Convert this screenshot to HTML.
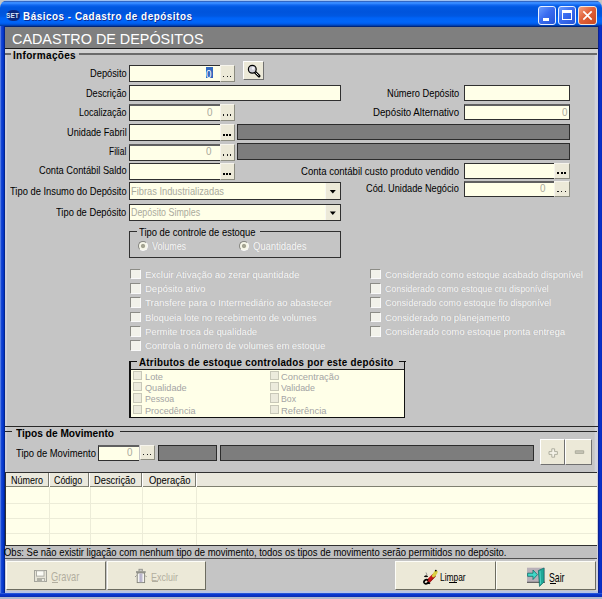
<!DOCTYPE html>
<html><head><meta charset="utf-8"><style>
html,body{margin:0;padding:0;width:602px;height:599px;overflow:hidden;background:#fff}
body{position:relative;font-family:"Liberation Sans",sans-serif;}
div{position:absolute;box-sizing:border-box}
.t{white-space:nowrap;line-height:20px;height:20px;transform-origin:0 0}
.inp{background:#ffffe8;border:1px solid #303030}
.dark{background:#7d7d7d;border:1px solid #2c2c2c}
.dbtn{background:#ece9d8;border:1px solid #f6f4ec;border-right-color:#8c8c80;border-bottom-color:#8c8c80}
.btn{background:#ece9d8;border:1px solid #fff;border-right-color:#707070;border-bottom-color:#707070}
.chk{background:#f2f2ea;border:1px solid #8c8c86;border-right-color:#fafafa;border-bottom-color:#fafafa}
.dis{color:#f4f4f4;text-shadow:-0.6px -0.6px 0 #a0a0a0}
</style></head><body>
<div style="left:0px;top:0px;width:602px;height:599px;background:#c5c5c5"></div>
<div style="left:0;top:0;width:602px;height:28px;border-radius:8px 8px 0 0;background:linear-gradient(to bottom,#a0c0f0 0px,#a0c0f0 0.6px,#2c5cb8 1.3px,#3a8cff 2.3px,#3287ff 3.5px,#1268f0 5px,#0058e2 7px,#0054dc 12px,#0058e2 16px,#0063f6 18px,#0066fa 22px,#005ae8 24px,#0040b0 25.5px,#001860 27px,#001860 28px)"></div>
<div style="left:0px;top:26px;width:5px;height:573px;background:linear-gradient(to right,#8aa8f0 0px,#1a4cd8 1px,#0a3cd0 2.5px,#0032c0 3.8px,#001a70 5px)"></div>
<div style="left:5px;top:49px;width:1.5px;height:544px;background:#cfcfd6"></div>
<div style="left:593.5px;top:49px;width:4.1px;height:544px;background:linear-gradient(to right,#c5c5c5,#d2d3da 40%,#d0d0da)"></div>
<div style="left:597.6px;top:26px;width:4.4px;height:573px;background:linear-gradient(to right,#0a1c78 0px,#0a2ab8 1.2px,#0a30c8 2.5px,#0828b8 4.4px)"></div>
<div style="left:5px;top:591.2px;width:593px;height:1.6px;background:#b8c4e4"></div>
<div style="left:0px;top:592.7px;width:602px;height:4.6px;background:linear-gradient(to bottom,#3a6ae0 0px,#0a38d0 1.2px,#0830c0 3px,#0a2aa8 4.6px)"></div>
<div style="left:0px;top:597.3px;width:602px;height:1.7px;background:#b0b8cc"></div>
<div style="left:6.5px;top:9.5px;width:13.5px;height:11px;border-radius:40%;background:radial-gradient(ellipse at 50% 50%,#08206a 0%,#0a2c88 65%,#0a46c0 100%)"></div>
<div class="t" style="left:6.40px;top:5.89px;font-size:7.83px;font-weight:bold;color:#d8e4fa;letter-spacing:0px;transform:scaleX(0.8419);">SET</div>
<div class="t" style="left:23.41px;top:6.49px;font-size:11.00px;font-weight:bold;color:#fff;letter-spacing:0.6px;transform:scaleX(0.8961);text-shadow:1px 1px 0 #0a2a90">Básicos - Cadastro de depósitos</div>
<div style="left:538px;top:6px;width:18px;height:18.5px;border:1px solid #e8f0ff;border-radius:3px;background:linear-gradient(135deg,#6a9cff 0%,#3a6cf0 45%,#2454d8 100%)"></div>
<div style="left:558px;top:6px;width:18px;height:18.5px;border:1px solid #e8f0ff;border-radius:3px;background:linear-gradient(135deg,#6a9cff 0%,#3a6cf0 45%,#2454d8 100%)"></div>
<div style="left:543px;top:18px;width:6px;height:3px;background:#fff"></div>
<div style="left:562px;top:10px;width:10px;height:10px;border:1px solid #fff;border-top:3px solid #fff"></div>
<div style="left:578px;top:6px;width:19px;height:18.5px;border:1px solid #f0e8e0;border-radius:3px;background:linear-gradient(135deg,#f4a080 0%,#e06038 45%,#c84820 100%)"></div>
<svg style="position:absolute;left:578px;top:6px" width="19" height="19"><path d="M5.3 5.3 L13.7 13.7 M13.7 5.3 L5.3 13.7" stroke="#fff" stroke-width="1.7"/></svg>
<div style="left:5px;top:27px;width:592.6px;height:22px;background:#7f7f7f;border-bottom:1px solid #1a1a1a"></div>
<div class="t" style="left:11.64px;top:28.78px;font-size:15.36px;font-weight:normal;color:#fff;letter-spacing:0px;transform:scaleX(0.9362);">CADASTRO DE DEPÓSITOS</div>
<div style="left:5px;top:49px;width:592px;height:4px;background:#d2d2d2"></div>
<div style="left:5px;top:53px;width:6px;height:2px;background:#6a6a6a"></div>
<div style="left:79px;top:53px;width:518px;height:2px;background:#6a6a6a"></div>
<div style="left:5px;top:425.6px;width:592.6px;height:1.1px;background:#282828"></div>
<div class="t" style="left:12.70px;top:46.44px;font-size:10.00px;font-weight:bold;color:#000;letter-spacing:0.3px;transform:scaleX(1.0037);">Informações</div>
<div class="t" style="left:89.50px;top:64.28px;font-size:10.14px;font-weight:normal;color:#000;letter-spacing:0px;transform:scaleX(0.9182);">Depósito</div>
<div class="t" style="left:85.60px;top:83.58px;font-size:10.14px;font-weight:normal;color:#000;letter-spacing:0px;transform:scaleX(0.9019);">Descrição</div>
<div class="t" style="left:78.70px;top:102.98px;font-size:10.14px;font-weight:normal;color:#000;letter-spacing:0px;transform:scaleX(0.8881);">Localização</div>
<div class="t" style="left:66.50px;top:123.08px;font-size:10.14px;font-weight:normal;color:#000;letter-spacing:0px;transform:scaleX(0.9065);">Unidade Fabril</div>
<div class="t" style="left:108.90px;top:142.38px;font-size:10.14px;font-weight:normal;color:#000;letter-spacing:0px;transform:scaleX(0.8306);">Filial</div>
<div class="t" style="left:38.60px;top:161.48px;font-size:10.14px;font-weight:normal;color:#000;letter-spacing:0px;transform:scaleX(0.9153);">Conta Contábil Saldo</div>
<div class="t" style="left:9.60px;top:181.98px;font-size:10.14px;font-weight:normal;color:#000;letter-spacing:0px;transform:scaleX(0.9235);">Tipo de Insumo do Depósito</div>
<div class="t" style="left:55.90px;top:202.78px;font-size:10.14px;font-weight:normal;color:#000;letter-spacing:0px;transform:scaleX(0.9229);">Tipo de Depósito</div>
<div class="inp" style="left:129px;top:65px;width:91px;height:17px;border-right:none"></div>
<div class="dbtn" style="left:219.5px;top:65px;width:15.5px;height:17px;"></div>
<div style="left:222.9px;top:75.8px;width:1.3px;height:1.3px;background:#202020"></div>
<div style="left:226.5px;top:75.8px;width:1.3px;height:1.3px;background:#202020"></div>
<div style="left:230.1px;top:75.8px;width:1.3px;height:1.3px;background:#202020"></div>
<div style="left:206px;top:67px;width:7px;height:11px;background:#3168c0"></div>
<div class="t" style="left:206.41px;top:63.88px;font-size:11.30px;font-weight:normal;color:#fff;letter-spacing:0px;transform:scaleX(0.8734);">0</div>
<div class="btn" style="left:243px;top:61px;width:21px;height:19px"></div>
<svg style="position:absolute;left:243px;top:61px" width="21" height="19"><path d="M12.2 11.2 L16 15" stroke="#000" stroke-width="2.9" stroke-linecap="round"/><path d="M12.6 11.6 L15.6 14.6" stroke="#f4f4f0" stroke-width="0.9"/><circle cx="9.3" cy="8.2" r="3.9" fill="#cfcfd8" stroke="#000" stroke-width="1.2"/><circle cx="10.2" cy="7.4" r="1.3" fill="#f4f4fa"/></svg>
<div class="inp" style="left:129px;top:84.5px;width:212px;height:16.5px;"></div>
<div class="inp" style="left:129px;top:103.5px;width:91px;height:17px;border-top:2px solid #606060;border-right:none"></div>
<div class="dbtn" style="left:219.5px;top:103.5px;width:15.5px;height:17px;"></div>
<div style="left:222.9px;top:114.3px;width:1.3px;height:1.3px;background:#202020"></div>
<div style="left:226.5px;top:114.3px;width:1.3px;height:1.3px;background:#202020"></div>
<div style="left:230.1px;top:114.3px;width:1.3px;height:1.3px;background:#202020"></div>
<div class="t" style="left:206.50px;top:102.98px;font-size:10.14px;font-weight:normal;color:#aaaa9c;letter-spacing:0px;transform:scaleX(0.9751);">0</div>
<div class="inp" style="left:129px;top:123.5px;width:91px;height:17px;border-right:none"></div>
<div class="dbtn" style="left:219.5px;top:123.5px;width:15.5px;height:17px;"></div>
<div style="left:222.9px;top:134.3px;width:2px;height:1.8px;background:#000"></div>
<div style="left:226.0px;top:134.3px;width:2px;height:1.8px;background:#000"></div>
<div style="left:229.1px;top:134.3px;width:2px;height:1.8px;background:#000"></div>
<div class="dark" style="left:237px;top:123.8px;width:333px;height:16.5px;"></div>
<div class="inp" style="left:129px;top:143.5px;width:91px;height:17px;border-top:2px solid #606060;border-right:none"></div>
<div class="dbtn" style="left:219.5px;top:143.5px;width:15.5px;height:17px;"></div>
<div style="left:222.9px;top:154.3px;width:1.3px;height:1.3px;background:#202020"></div>
<div style="left:226.5px;top:154.3px;width:1.3px;height:1.3px;background:#202020"></div>
<div style="left:230.1px;top:154.3px;width:1.3px;height:1.3px;background:#202020"></div>
<div class="t" style="left:206.00px;top:142.38px;font-size:10.14px;font-weight:normal;color:#aaaa9c;letter-spacing:0px;transform:scaleX(0.9751);">0</div>
<div class="dark" style="left:237px;top:143px;width:333px;height:16.8px;"></div>
<div class="inp" style="left:129px;top:162.5px;width:91px;height:17px;border-right:none"></div>
<div class="dbtn" style="left:219.5px;top:162.5px;width:15.5px;height:17px;"></div>
<div style="left:222.9px;top:173.3px;width:2px;height:1.8px;background:#000"></div>
<div style="left:226.0px;top:173.3px;width:2px;height:1.8px;background:#000"></div>
<div style="left:229.1px;top:173.3px;width:2px;height:1.8px;background:#000"></div>
<div class="inp" style="left:129px;top:182px;width:212px;height:18px;border-color:#303030;border-width:1.2px"></div>
<div style="left:325.2px;top:183px;width:15px;height:16px;background:#ece9d8;border-left:1px solid #f8f8f0"></div>
<svg style="position:absolute;left:325px;top:183px" width="15" height="16"><path d="M4.8 7 L10.8 7 L7.8 10.5 Z" fill="#000"/></svg>
<div class="t" style="left:130.94px;top:181.98px;font-size:10.14px;font-weight:normal;color:#aaaa9c;letter-spacing:0px;transform:scaleX(0.9181);">Fibras Industrializadas</div>
<div class="inp" style="left:129px;top:203.5px;width:212px;height:17.5px;border-color:#303030;border-width:1.2px"></div>
<div style="left:325.2px;top:204.5px;width:15px;height:15.5px;background:#ece9d8;border-left:1px solid #f8f8f0"></div>
<svg style="position:absolute;left:325px;top:204.5px" width="15" height="16"><path d="M4.8 6.5 L10.8 6.5 L7.8 10 Z" fill="#000"/></svg>
<div class="t" style="left:130.97px;top:202.73px;font-size:10.29px;font-weight:normal;color:#aaaa9c;letter-spacing:0px;transform:scaleX(0.8637);">Depósito Simples</div>
<div class="t" style="left:387.00px;top:83.58px;font-size:10.14px;font-weight:normal;color:#000;letter-spacing:0px;transform:scaleX(0.9163);">Número Depósito</div>
<div class="t" style="left:373.10px;top:102.78px;font-size:10.14px;font-weight:normal;color:#000;letter-spacing:0px;transform:scaleX(0.9560);">Depósito Alternativo</div>
<div class="t" style="left:301.20px;top:161.58px;font-size:10.14px;font-weight:normal;color:#000;letter-spacing:0px;transform:scaleX(0.9450);">Conta contábil custo produto vendido</div>
<div class="t" style="left:366.40px;top:178.98px;font-size:10.14px;font-weight:normal;color:#000;letter-spacing:0px;transform:scaleX(0.9108);">Cód. Unidade Negócio</div>
<div class="inp" style="left:464px;top:84.5px;width:106px;height:16.5px;"></div>
<div class="inp" style="left:464px;top:103.5px;width:106px;height:16.5px;border-top:2px solid #606060"></div>
<div class="t" style="left:561.50px;top:102.78px;font-size:10.14px;font-weight:normal;color:#aaaa9c;letter-spacing:0px;transform:scaleX(0.9751);">0</div>
<div class="inp" style="left:464px;top:162.5px;width:90px;height:16px;border-right:none"></div>
<div class="dbtn" style="left:554px;top:162.5px;width:16px;height:16px;"></div>
<div style="left:557.4px;top:172.3px;width:2px;height:1.8px;background:#000"></div>
<div style="left:560.5px;top:172.3px;width:2px;height:1.8px;background:#000"></div>
<div style="left:563.6px;top:172.3px;width:2px;height:1.8px;background:#000"></div>
<div class="inp" style="left:464px;top:181px;width:90px;height:16px;border-top:2px solid #606060;border-right:none"></div>
<div class="dbtn" style="left:554px;top:181px;width:16px;height:16px;"></div>
<div style="left:557.4px;top:190.8px;width:1.3px;height:1.3px;background:#202020"></div>
<div style="left:561.0px;top:190.8px;width:1.3px;height:1.3px;background:#202020"></div>
<div style="left:564.6px;top:190.8px;width:1.3px;height:1.3px;background:#202020"></div>
<div class="t" style="left:540.00px;top:178.98px;font-size:10.14px;font-weight:normal;color:#aaaa9c;letter-spacing:0px;transform:scaleX(0.9751);">0</div>
<div style="left:129px;top:231.2px;width:1.2px;height:26px;background:#303030"></div>
<div style="left:129px;top:231.2px;width:8px;height:1.2px;background:#303030"></div>
<div style="left:259.5px;top:231.2px;width:81px;height:1.2px;background:#303030"></div>
<div style="left:339.5px;top:231.2px;width:1.2px;height:26px;background:#303030"></div>
<div style="left:129px;top:256.5px;width:211.7px;height:1.2px;background:#303030"></div>
<div class="t" style="left:138.73px;top:222.98px;font-size:10.14px;font-weight:normal;color:#000;letter-spacing:0px;transform:scaleX(0.9308);">Tipo de controle de estoque</div>
<div style="left:137.79999999999998px;top:241.1px;width:9.8px;height:9.8px;border-radius:50%;border:1px solid #fafafa;border-top-color:#858580;border-left-color:#858580;background:radial-gradient(circle at 50% 50%,#a4a492 0,#a4a492 1.6px,#f6f6e8 2.6px,#f6f6e8 4px)"></div>
<div style="left:239.0px;top:241.1px;width:9.8px;height:9.8px;border-radius:50%;border:1px solid #fafafa;border-top-color:#858580;border-left-color:#858580;background:radial-gradient(circle at 50% 50%,#a4a492 0,#a4a492 1.6px,#f6f6e8 2.6px,#f6f6e8 4px)"></div>
<div class="t" style="left:151.87px;top:237.24px;font-size:10.00px;font-weight:normal;color:#f8f8f8;letter-spacing:0px;transform:scaleX(0.8864);text-shadow:-0.6px -0.5px 0 #acacac">Volumes</div>
<div class="t" style="left:252.73px;top:237.24px;font-size:10.00px;font-weight:normal;color:#f8f8f8;letter-spacing:0px;transform:scaleX(0.9433);text-shadow:-0.6px -0.5px 0 #acacac">Quantidades</div>
<div class="chk" style="left:129.7px;top:268.6px;width:11.3px;height:10.8px;"></div>
<div class="t" style="left:144.93px;top:264.79px;font-size:9.57px;font-weight:normal;color:#f8f8f8;letter-spacing:0px;transform:scaleX(0.9937);text-shadow:-0.6px -0.5px 0 #acacac">Excluir Ativação ao zerar quantidade</div>
<div class="chk" style="left:129.7px;top:283px;width:11.3px;height:10.8px;"></div>
<div class="t" style="left:144.93px;top:279.19px;font-size:9.57px;font-weight:normal;color:#f8f8f8;letter-spacing:0px;transform:scaleX(0.9950);text-shadow:-0.6px -0.5px 0 #acacac">Depósito ativo</div>
<div class="chk" style="left:129.7px;top:297.3px;width:11.3px;height:10.8px;"></div>
<div class="t" style="left:144.93px;top:293.49px;font-size:9.57px;font-weight:normal;color:#f8f8f8;letter-spacing:0px;transform:scaleX(1.0013);text-shadow:-0.6px -0.5px 0 #acacac">Transfere para o Intermediário ao abastecer</div>
<div class="chk" style="left:129.7px;top:311.5px;width:11.3px;height:10.8px;"></div>
<div class="t" style="left:144.94px;top:307.69px;font-size:9.57px;font-weight:normal;color:#f8f8f8;letter-spacing:0px;transform:scaleX(0.9775);text-shadow:-0.6px -0.5px 0 #acacac">Bloqueia lote no recebimento de volumes</div>
<div class="chk" style="left:129.7px;top:326px;width:11.3px;height:10.8px;"></div>
<div class="t" style="left:144.94px;top:322.19px;font-size:9.57px;font-weight:normal;color:#f8f8f8;letter-spacing:0px;transform:scaleX(0.9806);text-shadow:-0.6px -0.5px 0 #acacac">Permite troca de qualidade</div>
<div class="chk" style="left:129.7px;top:340.3px;width:11.3px;height:10.8px;"></div>
<div class="t" style="left:144.94px;top:336.49px;font-size:9.57px;font-weight:normal;color:#f8f8f8;letter-spacing:0px;transform:scaleX(0.9831);text-shadow:-0.6px -0.5px 0 #acacac">Controla o número de volumes em estoque</div>
<div class="chk" style="left:369.6px;top:268.6px;width:11px;height:10.8px;"></div>
<div class="t" style="left:384.74px;top:264.79px;font-size:9.57px;font-weight:normal;color:#f8f8f8;letter-spacing:0px;transform:scaleX(0.9797);text-shadow:-0.6px -0.5px 0 #acacac">Considerado como estoque acabado disponível</div>
<div class="chk" style="left:369.6px;top:283px;width:11px;height:10.8px;"></div>
<div class="t" style="left:384.77px;top:279.19px;font-size:9.57px;font-weight:normal;color:#f8f8f8;letter-spacing:0px;transform:scaleX(0.9152);text-shadow:-0.6px -0.5px 0 #acacac">Considerado como estoque cru disponível</div>
<div class="chk" style="left:369.6px;top:297.3px;width:11px;height:10.8px;"></div>
<div class="t" style="left:384.76px;top:293.49px;font-size:9.57px;font-weight:normal;color:#f8f8f8;letter-spacing:0px;transform:scaleX(0.9461);text-shadow:-0.6px -0.5px 0 #acacac">Considerado como estoque fio disponível</div>
<div class="chk" style="left:369.6px;top:311.5px;width:11px;height:10.8px;"></div>
<div class="t" style="left:384.74px;top:307.69px;font-size:9.57px;font-weight:normal;color:#f8f8f8;letter-spacing:0px;transform:scaleX(0.9789);text-shadow:-0.6px -0.5px 0 #acacac">Considerado no planejamento</div>
<div class="chk" style="left:369.6px;top:326px;width:11px;height:10.8px;"></div>
<div class="t" style="left:384.73px;top:322.19px;font-size:9.57px;font-weight:normal;color:#f8f8f8;letter-spacing:0px;transform:scaleX(0.9900);text-shadow:-0.6px -0.5px 0 #acacac">Considerado como estoque pronta entrega</div>
<div style="left:129.3px;top:369px;width:276px;height:48.5px;background:#ffffe8;border-top:1px solid #202020;border-bottom:1.3px solid #101010"></div>
<div style="left:129.3px;top:361px;width:1.4px;height:57px;background:#101010"></div>
<div style="left:129.3px;top:361px;width:7.5px;height:1.2px;background:#101010"></div>
<div style="left:399px;top:361px;width:6.5px;height:1.2px;background:#101010"></div>
<div style="left:404px;top:361px;width:1.4px;height:57px;background:#101010"></div>
<div class="t" style="left:139.21px;top:353.00px;font-size:10.40px;font-weight:bold;color:#000;letter-spacing:0.3px;transform:scaleX(0.9400);">Atributos de estoque controlados por este depósito</div>
<div style="left:132.7px;top:370.8px;width:9.6px;height:9.3px;background:#ecebdc;border:1px solid #c8c8b8"></div>
<div class="t" style="left:145.05px;top:366.89px;font-size:8.70px;font-weight:normal;color:#a4a4a4;letter-spacing:0px;transform:scaleX(1.0637);">Lote</div>
<div style="left:132.7px;top:382px;width:9.6px;height:9.3px;background:#ecebdc;border:1px solid #c8c8b8"></div>
<div class="t" style="left:145.05px;top:378.09px;font-size:8.70px;font-weight:normal;color:#a4a4a4;letter-spacing:0px;transform:scaleX(1.0528);">Qualidade</div>
<div style="left:132.7px;top:393.4px;width:9.6px;height:9.3px;background:#ecebdc;border:1px solid #c8c8b8"></div>
<div class="t" style="left:145.07px;top:389.49px;font-size:8.70px;font-weight:normal;color:#a4a4a4;letter-spacing:0px;transform:scaleX(1.0074);">Pessoa</div>
<div style="left:132.7px;top:404.8px;width:9.6px;height:9.3px;background:#ecebdc;border:1px solid #c8c8b8"></div>
<div class="t" style="left:145.05px;top:400.89px;font-size:8.70px;font-weight:normal;color:#a4a4a4;letter-spacing:0px;transform:scaleX(1.0456);">Procedência</div>
<div style="left:269.5px;top:370.8px;width:9.6px;height:9.3px;background:#ecebdc;border:1px solid #c8c8b8"></div>
<div class="t" style="left:281.44px;top:366.89px;font-size:8.70px;font-weight:normal;color:#a4a4a4;letter-spacing:0px;transform:scaleX(1.0759);">Concentração</div>
<div style="left:269.5px;top:382px;width:9.6px;height:9.3px;background:#ecebdc;border:1px solid #c8c8b8"></div>
<div class="t" style="left:281.47px;top:378.09px;font-size:8.70px;font-weight:normal;color:#a4a4a4;letter-spacing:0px;transform:scaleX(1.0250);">Validade</div>
<div style="left:269.5px;top:393.4px;width:9.6px;height:9.3px;background:#ecebdc;border:1px solid #c8c8b8"></div>
<div class="t" style="left:281.48px;top:389.49px;font-size:8.70px;font-weight:normal;color:#a4a4a4;letter-spacing:0px;transform:scaleX(1.0010);">Box</div>
<div style="left:269.5px;top:404.8px;width:9.6px;height:9.3px;background:#ecebdc;border:1px solid #c8c8b8"></div>
<div class="t" style="left:281.43px;top:400.89px;font-size:8.70px;font-weight:normal;color:#a4a4a4;letter-spacing:0px;transform:scaleX(1.0829);">Referência</div>
<div style="left:5px;top:431px;width:6.5px;height:1.1px;background:#282828"></div>
<div style="left:119.5px;top:431px;width:477.5px;height:1.1px;background:#282828"></div>
<div class="t" style="left:15.99px;top:423.33px;font-size:10.87px;font-weight:bold;color:#000;letter-spacing:0px;transform:scaleX(0.9351);">Tipos de Movimento</div>
<div class="t" style="left:16.03px;top:443.33px;font-size:10.58px;font-weight:normal;color:#000;letter-spacing:0px;transform:scaleX(0.8922);">Tipo de Movimento</div>
<div class="inp" style="left:98.3px;top:444.6px;width:41.2px;height:16px;border-top:2px solid #606060;border-right:none"></div>
<div class="dbtn" style="left:139.5px;top:444.6px;width:15px;height:15.8px;"></div>
<div style="left:142.9px;top:454.20000000000005px;width:1.3px;height:1.3px;background:#202020"></div>
<div style="left:146.5px;top:454.20000000000005px;width:1.3px;height:1.3px;background:#202020"></div>
<div style="left:150.1px;top:454.20000000000005px;width:1.3px;height:1.3px;background:#202020"></div>
<div class="t" style="left:127.00px;top:443.48px;font-size:10.14px;font-weight:normal;color:#aaaa9c;letter-spacing:0px;transform:scaleX(0.9751);">0</div>
<div class="dark" style="left:157.8px;top:444.6px;width:59.3px;height:16px;"></div>
<div class="dark" style="left:219.5px;top:444.6px;width:314px;height:16px;"></div>
<div class="btn" style="left:539.5px;top:438.7px;width:25px;height:26px"></div>
<div class="btn" style="left:565px;top:438.7px;width:26.5px;height:26px"></div>
<svg style="position:absolute;left:539.5px;top:438.7px" width="25" height="26"><path d="M11.8 9.8 h2.8 v2.8 h2.8 v2.8 h-2.8 v2.8 h-2.8 v-2.8 h-2.8 v-2.8 h2.8 z" fill="#f4f2e8" stroke="#a8a898" stroke-width="0.9"/></svg>
<svg style="position:absolute;left:565px;top:438.7px" width="26.5" height="26"><path d="M10.3 11.8 h8.4 v2.6 h-8.4 z" fill="#c8c6b8" stroke="#a8a898" stroke-width="0.9"/></svg>
<div style="left:5px;top:472px;width:592px;height:73.5px;background:#ffffea;border-top:1px solid #303030;border-left:1px solid #303030"></div>
<div style="left:6px;top:472.8px;width:591px;height:13.8px;background:#eae8dc;border-bottom:1px solid #808070"></div>
<div style="left:48.2px;top:473px;width:1.2px;height:13.5px;background:#7a7a70"></div>
<div style="left:49.400000000000006px;top:473px;width:1px;height:13.5px;background:#ffffff"></div>
<div style="left:87.7px;top:473px;width:1.2px;height:13.5px;background:#7a7a70"></div>
<div style="left:88.9px;top:473px;width:1px;height:13.5px;background:#ffffff"></div>
<div style="left:140.8px;top:473px;width:1.2px;height:13.5px;background:#7a7a70"></div>
<div style="left:142.0px;top:473px;width:1px;height:13.5px;background:#ffffff"></div>
<div style="left:195px;top:473px;width:1.2px;height:13.5px;background:#7a7a70"></div>
<div style="left:196.2px;top:473px;width:1px;height:13.5px;background:#ffffff"></div>
<div style="left:6px;top:503px;width:591px;height:1px;background:#ececd8"></div>
<div style="left:6px;top:518px;width:591px;height:1px;background:#ececd8"></div>
<div style="left:6px;top:533px;width:591px;height:1px;background:#ececd8"></div>
<div style="left:49.3px;top:487px;width:1px;height:58px;background:#ececd8"></div>
<div style="left:89.5px;top:487px;width:1px;height:58px;background:#ececd8"></div>
<div style="left:141.8px;top:487px;width:1px;height:58px;background:#ececd8"></div>
<div style="left:196px;top:487px;width:1px;height:58px;background:#ececd8"></div>
<div class="t" style="left:11.46px;top:470.78px;font-size:10.14px;font-weight:normal;color:#000;letter-spacing:0px;transform:scaleX(0.8885);">Número</div>
<div class="t" style="left:54.27px;top:470.78px;font-size:10.14px;font-weight:normal;color:#000;letter-spacing:0px;transform:scaleX(0.8787);">Código</div>
<div class="t" style="left:94.14px;top:470.78px;font-size:10.14px;font-weight:normal;color:#000;letter-spacing:0px;transform:scaleX(0.9219);">Descrição</div>
<div class="t" style="left:148.93px;top:470.78px;font-size:10.14px;font-weight:normal;color:#000;letter-spacing:0px;transform:scaleX(0.9332);">Operação</div>
<div style="left:5px;top:544.5px;width:592px;height:1.2px;background:#303030"></div>
<div style="left:5px;top:545.5px;width:592px;height:12.5px;background:#c0c0c0"></div>
<div style="left:5px;top:557.6px;width:592px;height:1.2px;background:#505050"></div>
<div class="t" style="left:4.43px;top:542.23px;font-size:10.87px;font-weight:normal;color:#000;letter-spacing:0px;transform:scaleX(0.8717);">Obs: Se não existir ligação com nenhum tipo de movimento, todos os tipos de movimento serão permitidos no depósito.</div>
<div style="left:6.4px;top:561px;width:100.1px;height:29px;background:#ece9d8;border:1px solid #fdfdf8;border-right:1.5px solid #6c6c60;border-bottom:1.5px solid #6c6c60"></div>
<div style="left:107.3px;top:561px;width:99.2px;height:29px;background:#ece9d8;border:1px solid #fdfdf8;border-right:1.5px solid #6c6c60;border-bottom:1.5px solid #6c6c60"></div>
<div style="left:394.6px;top:561px;width:101.19999999999999px;height:29px;background:#ece9d8;border:1px solid #fdfdf8;border-right:1.5px solid #6c6c60;border-bottom:1.5px solid #6c6c60"></div>
<div style="left:496px;top:561px;width:100.29999999999995px;height:29px;background:#ece9d8;border:1px solid #fdfdf8;border-right:1.5px solid #6c6c60;border-bottom:1.5px solid #6c6c60"></div>
<svg style="position:absolute;left:34px;top:570px" width="13" height="12"><rect x="0.5" y="0.5" width="12" height="11" fill="#e6e4d8" stroke="#a4a49c"/><rect x="2.5" y="0.8" width="7.5" height="5.3" fill="#fbfbf5" stroke="#a8a8a0" stroke-width="0.9"/><rect x="3" y="8" width="8" height="3.6" fill="#b0b0a6"/><rect x="8" y="9" width="2" height="2" fill="#ecebe2"/></svg>
<div class="t" style="left:50.64px;top:566.98px;font-size:11.88px;font-weight:normal;color:#b2ae9f;letter-spacing:0px;transform:scaleX(0.7797);">Gravar</div>
<div style="left:51.5px;top:581.5px;width:6.5px;height:1px;background:#b2ae9f"></div>
<svg style="position:absolute;left:134px;top:568px" width="14" height="16"><rect x="5" y="1.3" width="3.3" height="1.7" fill="#fff" stroke="#8a8a84" stroke-width="0.9"/><rect x="2" y="3" width="9.7" height="2" fill="#a0a098"/><rect x="3.2" y="5" width="7.4" height="9.6" fill="#f4f4f0" stroke="#808078" stroke-width="0.9"/><rect x="5.2" y="5.6" width="3.4" height="8.5" fill="#c8c4d8"/><path d="M6.9 5.6 v8.5" stroke="#a8a4bc" stroke-width="0.8"/><path d="M1 9 L2.6 7.4 M12.6 9 L11 7.4" stroke="#909088" stroke-width="0.9"/></svg>
<div class="t" style="left:151.06px;top:566.78px;font-size:10.72px;font-weight:normal;color:#b2ae9f;letter-spacing:0px;transform:scaleX(0.8392);">Excluir</div>
<div style="left:152px;top:581.2px;width:6px;height:1px;background:#b2ae9f"></div>
<svg style="position:absolute;left:418px;top:565px" width="24" height="24"><path d="M11 15.5 L15.8 10.6" stroke="#c41818" stroke-width="4" stroke-linecap="round"/><path d="M15.6 10.8 L18 7" stroke="#d8d040" stroke-width="3.4" stroke-linecap="round"/><path d="M12.2 16.6 L17.2 11.4" stroke="#801010" stroke-width="0.8"/><circle cx="17.8" cy="5.6" r="0.9" fill="#000"/><path d="M10.2 15.2 C7.5 13.8 5.5 15.8 6 17.6 C6.5 19.2 9 19.2 10.4 17.4 L12 18.6" fill="none" stroke="#000" stroke-width="1.8"/><path d="M6.6 12 C7.2 10.6 9 10.6 9.4 12" fill="none" stroke="#000" stroke-width="1.5"/><path d="M8 7.5 L9 10" stroke="#808080" stroke-width="0.8"/></svg>
<div class="t" style="left:439.70px;top:567.43px;font-size:10.58px;font-weight:normal;color:#000;letter-spacing:0px;transform:scaleX(0.7926);">Limpar</div>
<div style="left:449px;top:581.8px;width:8px;height:1px;background:#000"></div>
<svg style="position:absolute;left:522px;top:563px" width="26" height="26"><rect x="5" y="4.7" width="18" height="15" fill="#b8b0b8"/><path d="M5 19.3 L23 19.3" stroke="#404040" stroke-width="0.9"/><path d="M16.4 7.5 L22 5 L22 19 L17.5 23.4 Z" fill="#20a898" stroke="#0e6a60" stroke-width="0.7"/><path d="M18 8 L18.6 21" stroke="#50d8c8" stroke-width="0.9"/><path d="M5.6 10.2 L11 10.2 L11 7 L15.4 11.7 L11 16.5 L11 13.3 L5.6 13.3 Z" fill="#40d8c8" stroke="#0e7068" stroke-width="0.8"/></svg>
<div class="t" style="left:549.18px;top:567.73px;font-size:12.90px;font-weight:normal;color:#000;letter-spacing:0px;transform:scaleX(0.6767);">Sair</div>
<div style="left:550px;top:582.6px;width:6px;height:1px;background:#000"></div>
</body></html>
